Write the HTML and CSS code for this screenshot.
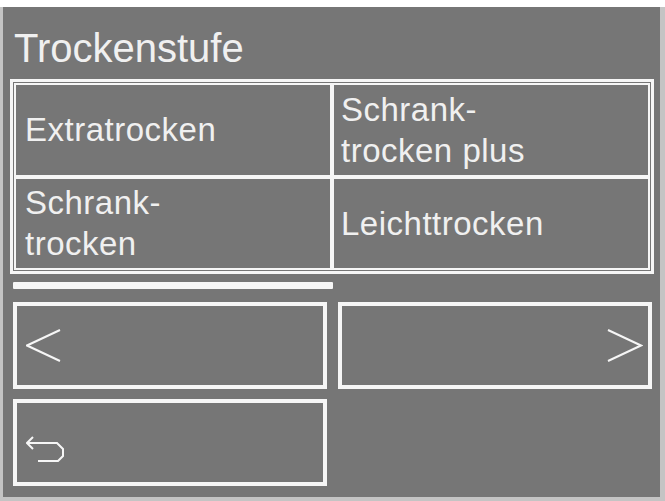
FILE: index.html
```html
<!DOCTYPE html>
<html lang="de">
<head>
<meta charset="utf-8">
<title>Trockenstufe</title>
<link rel="stylesheet" href="styles.css">
</head>
<body>
<div class="bezel">
  <main class="panel">
    <h1 class="title">Trockenstufe</h1>

    <div class="frame">
      <div class="options">
        <div class="option">Extratrocken</div>
        <div class="option">Schrank-<br>trocken plus</div>
        <div class="option">Schrank-<br>trocken</div>
        <div class="option">Leichttrocken</div>
      </div>
    </div>

    <div class="pager"></div>

    <div class="nav">
      <div class="btn btn-prev">
        <svg width="36" height="34" viewBox="0 0 36 34"><polyline points="34,1 1,16.5 34,32" /></svg>
      </div>
      <div class="btn btn-next">
        <svg width="36" height="34" viewBox="0 0 36 34"><polyline points="1,1 34,16.5 1,32" /></svg>
      </div>
      <div class="btn btn-back">
        <svg width="40" height="30" viewBox="0 0 40 30"><polyline points="7,3 1,9 7,15" /><polyline points="1,9 31,9 37,15 37,22 32,27 12,27" /></svg>
      </div>
    </div>
  </main>
</div>
</body>
</html>
```

FILE: styles.css
```css
html, body {
  margin: 0;
  padding: 0;
  background: #ffffff;
}

body {
  padding-top: 7px;
  font-family: "Liberation Sans", Arial, sans-serif;
}

.bezel {
  background: #c4c4c4;
  padding: 0 5px 4px 3px;
}

.panel {
  background: #767676;
  height: 490px;
  box-sizing: border-box;
  padding: 21px 6px 0 7px;
  color: #f0f0f0;
}

.title {
  margin: 0 0 11px 0;
  padding-left: 4px;
  font-size: 40px;
  font-weight: normal;
  line-height: 40px;
  height: 40px;
}

/* option table: white outer rule, thin gray gap, white cell rules */
.frame {
  border: 3px solid #f6f6f6;
  padding: 1px;
  height: 195px;
  box-sizing: border-box;
}

.options {
  display: grid;
  grid-template-columns: 1fr 1fr;
  grid-template-rows: 1fr 1fr;
  gap: 4px;
  padding: 2px;
  background: #f6f6f6;
  height: 100%;
  box-sizing: border-box;
}

.option {
  background: #767676;
  display: flex;
  align-items: center;
  font-size: 33px;
  letter-spacing: 0.5px;
  line-height: 41px;
  padding-left: 9px;
}

.option:nth-child(even) {
  padding-left: 7px;
}

.pager {
  margin: 8px 0 0 3px;
  width: 320px;
  height: 7px;
  background: #f6f6f6;
  border-radius: 1px;
}

.nav {
  display: grid;
  grid-template-columns: 314px 314px;
  grid-template-rows: 87px 87px;
  column-gap: 11px;
  row-gap: 10px;
  margin: 13px 0 0 3px;
}

.btn {
  border: 4px solid #f6f6f6;
  display: flex;
  align-items: center;
}

.btn svg {
  display: block;
  fill: none;
  stroke: #f6f6f6;
  stroke-width: 2;
}

.btn-prev {
  padding-left: 9px;
}

.btn-next {
  justify-content: flex-end;
  padding-right: 5px;
}

.btn-back {
  align-items: flex-start;
  padding-left: 9px;
}

.btn-back svg {
  margin-top: 31px;
}
```
